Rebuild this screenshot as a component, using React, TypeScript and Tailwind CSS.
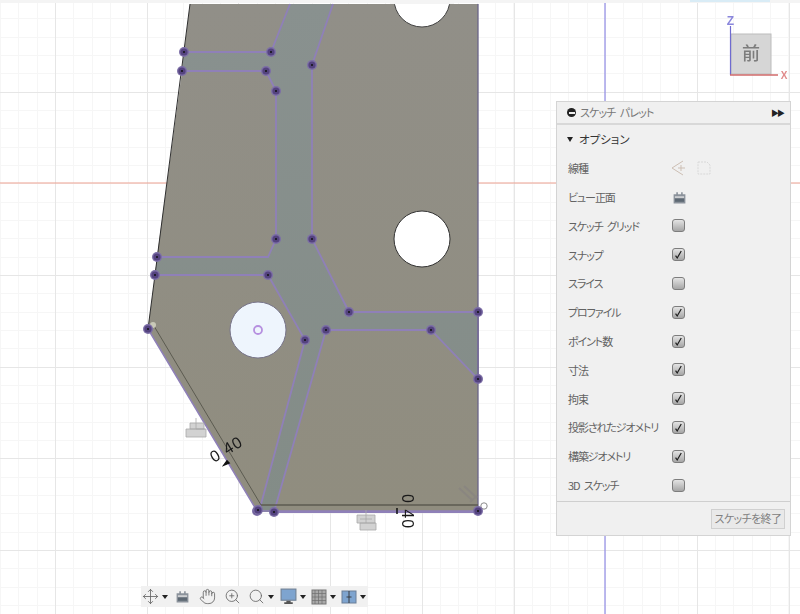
import { Hand, Move, Search, ZoomIn } from "lucide-react"

const jp = "font-['Noto_Sans_CJK_JP','Noto_Sans',sans-serif] [font-feature-settings:'palt']"

const points = [
  [184, 52], [271, 52], [182, 71], [266, 71], [276, 91], [312, 65], [157, 257], [276, 239], [312, 239],
  [155, 275], [268, 275], [148, 329], [349, 312], [478, 312], [326, 330], [431, 330], [305, 340], [478, 379],
  [257, 511], [258, 510], [274, 512], [478, 511],
]

const minor = Array.from({ length: 44 }, (_, i) => Math.round(i * 18.33) + 0.5)
const minorY = Array.from({ length: 34 }, (_, i) => Math.round(i * 18.33) + 0.5)
const majorX = [55.5, 147.5, 238.5, 330.5, 422.5, 514.5, 697.5, 789.5]
const majorY = [92.5, 275.5, 367.5, 458.5, 550.5]

const options: { label: string; checked?: boolean; icon?: "lineType" | "view" }[] = [
  { label: "線種", icon: "lineType" },
  { label: "ビュー正面", icon: "view" },
  { label: "スケッチ グリッド", checked: false },
  { label: "スナップ", checked: true },
  { label: "スライス", checked: false },
  { label: "プロファイル", checked: true },
  { label: "ポイント数", checked: true },
  { label: "寸法", checked: true },
  { label: "拘束", checked: true },
  { label: "投影されたジオメトリ", checked: true },
  { label: "構築ジオメトリ", checked: true },
  { label: "3D スケッチ", checked: false },
]

function ViewIcon({ className }: { className?: string }) {
  return (
    <svg viewBox="0 0 14 14" className={className}>
      <path d="M1.500 4h2.500V2h1.500v2h3V2H10v2h2.500v8.500h-11z" fill="#8b929b" />
      <rect x="2.700" y="6" width="8.600" height="1.200" fill="#e8e8e8" />
      <rect x="2.700" y="8" width="8.600" height="3" fill="#5d6873" />
    </svg>
  )
}

function Check({ checked }: { checked?: boolean }) {
  return (
    <span className="flex h-[13px] w-[13px] items-center justify-center rounded-[3px] border border-[#7d7d7d] bg-gradient-to-b from-[#e4e4e4] to-[#a6a6a6]">
      {checked && (
        <svg viewBox="0 0 12 12" className="h-[11px] w-[11px]">
          <path d="M2.800 7.200 4.600 9.800 9 2.200" fill="none" stroke="#1c1c1c" strokeWidth="1.300" />
        </svg>
      )}
    </span>
  )
}

function Caret() {
  return <span className="ml-[3px] h-0 w-0 border-x-[3px] border-t-[4px] border-x-transparent border-t-[#222]" />
}

function Palette() {
  return (
    <div className={`absolute left-[556px] top-[101px] flex h-[435px] w-[235px] flex-col border border-[#d4d4d4] bg-[#f0f0f0] text-[#626262] ${jp}`}>
      <div className="flex h-[23px] shrink-0 items-center border-b-2 border-[#d8d8d8] pl-[10px] pr-[7px] text-[11px] tracking-[-0.9px] [word-spacing:3px]">
        <span className="flex h-[9px] w-[9px] items-center justify-center rounded-full bg-[#222]">
          <span className="h-[2px] w-[6px] bg-[#eee]" />
        </span>
        <span className="ml-[4px] text-[#777]">スケッチ パレット</span>
        <span className="ml-auto text-[8px] tracking-[-2px] text-[#222]">▶▶</span>
      </div>
      <div className="flex h-[27px] shrink-0 items-center pl-[10px] pt-[2px] text-[11.5px] text-[#333]">
        <span className="mr-[6px] h-0 w-0 border-x-[3.5px] border-t-[5px] border-x-transparent border-t-[#222]" />
        オプション
      </div>
      <div className="flex flex-col pl-[11px] pt-[2px]">
        {options.map((o) => (
          <div key={o.label} className="flex h-[28.8px] items-center text-[11px]">
            <span className="w-[103.5px] whitespace-nowrap tracking-[-1.1px] [word-spacing:3px]">{o.label}</span>
            {o.icon === "lineType" && (
              <svg viewBox="0 0 44 18" className="h-[18px] w-[44px] -translate-x-[3px]">
                <path d="M14 2 3 9l11 7M9 9h7M12 6v6" fill="none" stroke="#cdbfb4" strokeWidth="1" />
                <path d="M29 3h9l3 3v9h-12z" fill="none" stroke="#d8d8d8" strokeWidth="1" strokeDasharray="2 1" />
              </svg>
            )}
            {o.icon === "view" && <ViewIcon className="h-[15px] w-[15px]" />}
            {o.icon === undefined && <Check checked={o.checked} />}
          </div>
        ))}
      </div>
      <div className="mt-auto flex h-[34px] items-center justify-end border-t border-[#cfcfcf] pr-[5px]">
        <button className="flex h-[20px] w-[74px] items-center justify-center whitespace-nowrap border border-[#d0d0d0] bg-[#e9e9e9] text-[11px] tracking-[-0.6px] text-[#808080]">
          スケッチを終了
        </button>
      </div>
    </div>
  )
}

function Toolbar() {
  return (
    <div className="absolute left-[141px] top-[586px] flex h-[21px] w-[227px] items-center bg-[#f1f1f1] pl-[1px] text-[#666]">
      <Move size={17} strokeWidth={1.2} />
      <Caret />
      <ViewIcon className="ml-[7px] h-[15px] w-[15px]" />
      <Hand size={17} strokeWidth={1.2} className="ml-[9px]" />
      <ZoomIn size={17} strokeWidth={1.2} className="ml-[8px]" />
      <Search size={17} strokeWidth={1.2} className="ml-[7px]" />
      <Caret />
      <svg viewBox="0 0 16 16" className="ml-[6px] h-[17px] w-[17px]">
        <rect x="1" y="1" width="14" height="10.500" fill="#7ea4cf" stroke="#6f7f92" />
        <path d="M6 12h4v1.500h2V15H4v-1.500h2z" fill="#555" />
      </svg>
      <Caret />
      <svg viewBox="0 0 16 16" className="ml-[5px] h-[16px] w-[16px]">
        <rect x="1" y="1" width="14" height="14" fill="#a9a9a9" stroke="#777" />
        <path d="M4 1v14M7.500 1v14M11 1v14M1 4.500h14M1 8h14M1 11.500h14" stroke="#6f6f6f" strokeWidth="0.700" />
      </svg>
      <Caret />
      <svg viewBox="0 0 16 16" className="ml-[5px] h-[16px] w-[16px]">
        <rect x="1" y="2" width="14" height="12" fill="#7ea4cf" stroke="#6a7f98" />
        <path d="M8 2v12M5.500 8h5" stroke="#333" strokeWidth="0.900" />
      </svg>
      <Caret />
    </div>
  )
}

function Canvas() {
  return (
    <svg viewBox="0 0 800 614" className="absolute inset-0 h-[614px] w-[800px]">
      <defs>
        <linearGradient id="body" x1="0" y1="0" x2="0" y2="1">
          <stop offset="0" stopColor="#918f88" />
          <stop offset="1" stopColor="#908d7f" />
        </linearGradient>
        <linearGradient id="channel" x1="0" y1="0" x2="0" y2="1">
          <stop offset="0" stopColor="#89918f" />
          <stop offset="1" stopColor="#838c87" />
        </linearGradient>
      </defs>
      <rect width="800" height="614" fill="#ffffff" />
      {minor.map((x) => (
        <line key={x} x1={x} x2={x} y1="0" y2="614" stroke="#f6f6f6" />
      ))}
      {minorY.map((y) => (
        <line key={y} x1="0" x2="800" y1={y} y2={y} stroke="#f6f6f6" />
      ))}
      {majorX.map((x) => (
        <line key={x} x1={x} x2={x} y1="0" y2="614" stroke="#e6e6e6" />
      ))}
      {majorY.map((y) => (
        <line key={y} x1="0" x2="800" y1={y} y2={y} stroke="#e6e6e6" />
      ))}
      <line x1="0" x2="800" y1="183" y2="183" stroke="#ec9f90" strokeWidth="1.200" />
      <line x1="605" x2="605" y1="0" y2="614" stroke="#8f8ae4" strokeWidth="1.200" />
      <rect x="0" y="0" width="800" height="3" fill="#f4f4f4" />
      <rect x="690" y="0" width="80" height="2" fill="#d9ecf6" />

      <g className="blur-[0.4px]">
        <path d="M190 4H478V511H257L148 329 155 275 157 257 182 71 184 52Z" fill="url(#body)" />
        <path
          d="M290 4H333L312 65V239L349 312H478V379L431 330H326L274 512H260L305 340 268 275H155L157 257H268L276 239V91L266 71H182L184 52H271Z"
          fill="url(#channel)"
        />
        <path
          d="M290 4 271 52H184M182 71H266L276 91V239L268 257H157M155 275H268L305 340 260 508M333 4 312 65V239L349 312H478V379L431 330H326L274 512H478"
          fill="none"
          stroke="#8f80b8"
          strokeWidth="1.800"
        />
        <path d="M478 4V511" stroke="#6a6488" strokeWidth="1.300" />
        <path d="M190 4 148 329" stroke="#2f2f2f" strokeWidth="1" />
        <path d="M154 326 261 505" fill="none" stroke="#5c5b50" strokeWidth="1" />
        <path d="M261 505H478" fill="none" stroke="#5c5b50" strokeWidth="1.500" />
        <path d="M148 329 257 511H478" fill="none" stroke="#8f80b8" strokeWidth="1.500" />
        <circle cx="422" cy="-1" r="28" fill="#ffffff" stroke="#444" />
        <rect x="390" y="0" width="64" height="4" fill="#f4f4f4" />
        <circle cx="422" cy="239" r="28" fill="#ffffff" stroke="#333" />
        <circle cx="258" cy="330" r="28" fill="#eef5fd" stroke="#77748a" />
        <circle cx="258" cy="330" r="4" fill="none" stroke="#b690e0" strokeWidth="1.800" />
        <circle cx="153" cy="325" r="3" fill="#c9c9b8" />
        <circle cx="484" cy="506" r="3.200" fill="#ffffff" stroke="#8a8a8a" />

        {points.map(([x, y]) => (
          <g key={`${x}-${y}`}>
            <circle cx={x} cy={y} r="5" fill="#7c6ea6" />
            <circle cx={x} cy={y} r="3.600" fill="#54437f" />
            <circle cx={x} cy={y} r="1" fill="#111" />
          </g>
        ))}

        <g fill="#d2d2d2" stroke="#a8a8a8" strokeWidth="0.800">
          <path d="M186 429h20v8h-20zM190 423h14v6h-14z" />
          <path d="M196 418v11h9" fill="none" />
          <path d="M357 515h18v8h-18zM360 523h16v7h-16z" />
          <path d="M366 510v13M360 519h12" fill="none" />
        </g>
        <path d="M459 488 472 500M464 486 477 498M470 502l7-6" stroke="#8a8680" strokeWidth="2" fill="none" />

        <g fill="#1a1a1a" fontFamily="'Liberation Sans', sans-serif" fontSize="16">
          <text transform="translate(214 463) rotate(-31)" letterSpacing="1">0 40</text>
          <text transform="translate(402 494) rotate(90)" letterSpacing="1">0 40</text>
        </g>
        <path d="M224 465l5-2-2-2zM397 508v6" stroke="#111" strokeWidth="1.500" fill="#111" />
      </g>

      {/* view cube */}
      <g className="blur-[0.4px]">
        <rect x="731" y="34" width="40" height="40" fill="#d6d6d6" stroke="#bcbcbc" />
        <text x="751" y="60" textAnchor="middle" fontSize="18" fontWeight="500" fill="#7d7d7d" fontFamily="'Noto Sans CJK JP', sans-serif">前</text>
        <line x1="730.500" x2="730.500" y1="26" y2="75" stroke="#6f6bd0" strokeWidth="1.200" />
        <line x1="730" x2="778" y1="75" y2="75" stroke="#d06a6a" strokeWidth="1.400" />
        <text x="730.500" y="25" textAnchor="middle" fontSize="12" fontWeight="700" fill="#8a86dc" fontFamily="'Liberation Sans', sans-serif">Z</text>
        <text x="784" y="79" textAnchor="middle" fontSize="10" fontWeight="700" fill="#e08a8a" fontFamily="'Liberation Sans', sans-serif">X</text>
      </g>
    </svg>
  )
}

export default function App() {
  return (
    <div className="relative h-[614px] w-[800px] overflow-hidden bg-white">
      <Canvas />
      <Palette />
      <Toolbar />
    </div>
  )
}
